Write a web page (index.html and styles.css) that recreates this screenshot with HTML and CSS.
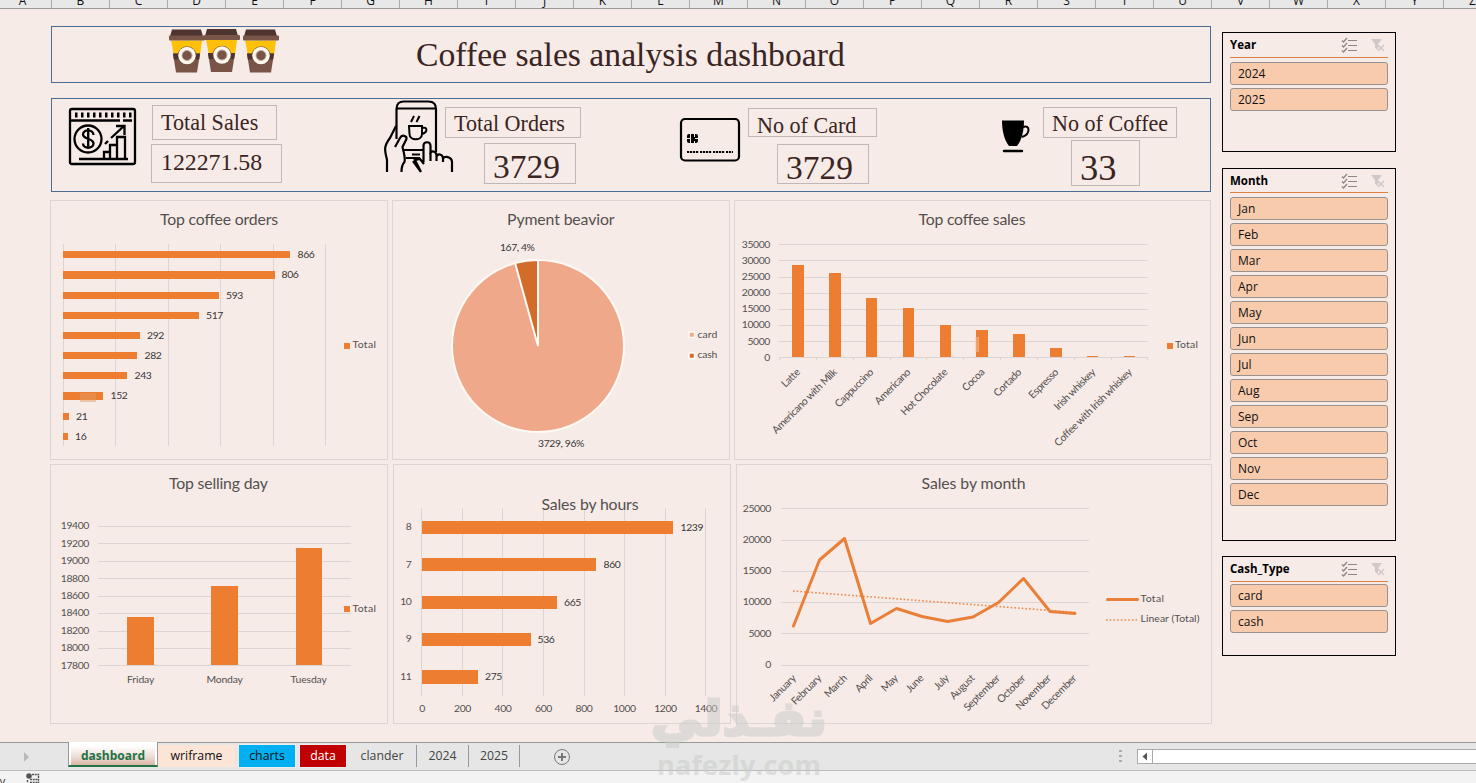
FILE: index.html
```html
<!DOCTYPE html>
<html lang="en">
<head>
<meta charset="utf-8">
<title>Coffee sales analysis dashboard</title>
<link rel="stylesheet" href="styles.css">
</head>
<body>
<div class="columns"><span>A</span><span>B</span><span>C</span><span>D</span><span>E</span><span>F</span><span>G</span><span>H</span><span>I</span><span>J</span><span>K</span><span>L</span><span>M</span><span>N</span><span>O</span><span>P</span><span>Q</span><span>R</span><span>S</span><span>T</span><span>U</span><span>V</span><span>W</span><span>X</span><span>Y</span><span>Z</span></div>

<div class="sheet">
<main class="board">
  <header class="banner">
    <svg class="cups" width="112" height="46" viewBox="168 28 112 46">
      <defs><g id="cup">
        <path d="M3 1h29l2 7H1z" fill="#4e342e"/><path d="M2 12h31l-2 15H5z" fill="#ffc107"/>
        <path d="M4 25h27l-3 19H7z" fill="#795548"/><path d="M4 25h27l-.8 6H4.800z" fill="#4e342e"/>
        <rect y="7" width="36" height="5" rx="1" fill="#795548"/>
        <circle cx="18" cy="27" r="9.300" fill="#6d4c41"/><circle cx="18" cy="27" r="8.700" fill="#fff8ee"/><circle cx="18" cy="27" r="5" fill="#795548"/>
        <circle cx="18" cy="27" r="5" fill="none" stroke="#bcaaa4" stroke-width="1"/>
      </g></defs>
      <use href="#cup" x="169" y="28.500"/><use href="#cup" x="204" y="28"/><use href="#cup" x="243" y="28.500"/>
    </svg>
    <h1>Coffee sales analysis dashboard</h1>
  </header>

  <section class="kpis">
    <div class="kpi sales">
      <svg width="70" height="60" viewBox="68 107 70 60" fill="none" stroke="#000" stroke-width="2.300">
        <rect x="70" y="109" width="65" height="55" rx="2"/>
        <path d="M75 115h58" stroke-width="5" stroke-dasharray="2.500 3.500"/>
        <path d="M70 120.500h50m3 0h9M79 159h49"/>
        <circle cx="88" cy="139" r="13.500"/>
        <path d="M93.500 135c0-6-10.500-6-10.500-.5 0 5 10.500 3.500 10.500 9 0 5.500-10.500 5.500-10.500 0M88.200 128v21"/>
        <path d="M104 158v-6h6v6m0 0v-13h7v13m0 0v-21h8v21M105 144l3-3m3-3l13-12m-8 0h8.500v9"/>
      </svg>
      <div class="boxes"><div class="name">Total Sales</div><div class="value">122271.58</div></div>
    </div>
    <div class="kpi orders">
      <svg width="72" height="76" viewBox="383 99 72 76" fill="none" stroke="#000" stroke-width="2.200">
        <path d="M396.500 139v-30c0-5 3-7.500 7-7.500h25c5 0 7.500 3 7.500 7.500v43M396.500 108.500h39M404 150h20M406 158h14M412 154.500h8"/>
        <path d="M409 126h13v8c0 7-12.500 7-12.500 0zM422 128c6-2 6 5-.8 6M411 122l3-6m2.500 6l3-6" stroke-width="2"/>
        <path d="M396 126l-6 12c-7 9-5 13-3 22v12M395 147l5-9c2-4 7-2 6.500 1l-4 8c2 9 3 11 2 15-2 2-3 6-3 10M413 161l8 11M423.500 162v-16c0-5 7-5 7 0v15M430 154c1-4 6-3 6.500 1v6m0-4c1-4 6-3 6.500 1v4m0-3c1-4 9-2 9 3v10M424 164l-4-5-5 1 6 12"/>
      </svg>
      <div class="boxes"><div class="name">Total Orders</div><div class="value">3729</div></div>
    </div>
    <div class="kpi card">
      <svg width="62" height="46" viewBox="679 117 62 46">
        <rect x="681" y="119" width="58" height="41.500" rx="4" fill="none" stroke="#000" stroke-width="2.200"/>
        <rect x="687" y="134" width="11" height="9" rx="2"/>
        <path d="M690.500 133v11M694.500 133v4M694.500 141v3M687 138.500h3M695 138.500h4" stroke="#f6ebe7"/>
        <path d="M687 152h46" stroke="#000" stroke-width="2.200" stroke-dasharray="2.200 .8 2.200 .8 2.200 .8 2.200 1.800"/>
      </svg>
      <div class="boxes"><div class="name">No of Card</div><div class="value">3729</div></div>
    </div>
    <div class="kpi coffee">
      <svg width="30" height="34" viewBox="1001 119 30 34">
        <path d="M1002 120.500h22c0 10-2 19-7 25.500h-8c-5-6-7-16-7-25.500z"/>
        <path d="M1023 127c7-3 8 7-1 10" fill="none" stroke="#000" stroke-width="2"/>
        <path d="M1004 151h18" stroke="#000" stroke-width="2.400" stroke-linecap="round"/>
      </svg>
      <div class="boxes"><div class="name">No of Coffee</div><div class="value">33</div></div>
    </div>
  </section>

  <section class="row top">
    <svg class="chart" width="338" height="260" viewBox="50 200 338 260">
      <text class="title" x="160" y="225" textLength="118">Top coffee orders</text>
      <path class="grid" d="M63.500 244v202M115.500 244v202M168.500 244v202M220.500 244v202M273.500 244v202M325.500 244v202"/>
      <path class="bar" d="M63 251h227v7H63zM63 271h212v8H63zM63 292h156v7H63zM63 312h136v7H63zM63 332h77v7H63zM63 352h74v7H63zM63 372h64v7H63zM63 392h40v8H63zM63 413h6v7H63zM63 433h5v7H63z"/>
      <rect x="80" y="393" width="16" height="9" fill="#e59a64" opacity=".5"/>
      <g class="dark"><text x="297.500" y="258">866</text><text x="281.500" y="278">806</text><text x="226" y="299">593</text><text x="206" y="319">517</text><text x="147" y="339">292</text><text x="144.500" y="359">282</text><text x="134.500" y="379">243</text><text x="110.500" y="399">152</text><text x="76" y="420">21</text><text x="75" y="440">16</text></g>
      <rect class="bar" x="344" y="343" width="6" height="6"/><text x="352.500" y="348" textLength="23">Total</text>
    </svg>
    <svg class="chart" width="338" height="260" viewBox="392 200 338 260">
      <text class="title" x="507" y="225" textLength="107.500">Pyment beavior</text>
      <circle cx="538" cy="346" r="86" fill="#f0a88a" stroke="#fffaf3" stroke-width="2"/>
      <path d="M538 346L515.100 263.100A86 86 0 0 1 538 260z" fill="#d16c2a" stroke="#fffaf3" stroke-width="2"/>
      <g class="dark"><text x="500" y="251" textLength="34.500">167, 4%</text><text x="538" y="447" textLength="46">3729, 96%</text></g>
      <g stroke="#fffaf3" stroke-width="1.500"><rect x="689" y="332" width="5.500" height="5.500" fill="#f0a88a"/><rect x="689" y="353" width="5.500" height="5.500" fill="#d16c2a"/></g>
      <text x="697.500" y="338" textLength="19.500">card</text><text x="697.500" y="358" textLength="19.500">cash</text>
    </svg>
    <svg class="chart" width="477" height="260" viewBox="734 200 477 260">
      <text class="title" x="918.500" y="225" textLength="107">Top coffee sales</text>
      <path class="grid" d="M779 244.500h369M779 260.500h369M779 277.500h369M779 293.500h369M779 309.500h369M779 325.500h369M779 341.500h369M779 357.500h369M779.500 357v3M816.500 357v3M853.500 357v3M890.500 357v3M926.500 357v3M963.500 357v3M1000.500 357v3M1037.500 357v3M1074.500 357v3M1111.500 357v3M1147.500 357v3"/>
      <path class="bar" d="M792 265h12v92h-12zM829 273h12v84h-12zM866 298h11v59h-11zM903 308h11v49h-11zM940 325h11v32h-11zM976 330h12v27h-12zM1013 334h12v23h-12zM1050 348h12v9h-12zM1087 356h11v1h-11zM1124 356h11v1h-11z"/>
      <rect x="975" y="337" width="4" height="15" fill="#f5c3a0" opacity=".5"/>
      <g class="end"><text x="770" y="248">35000</text><text x="770" y="264">30000</text><text x="770" y="280">25000</text><text x="770" y="296">20000</text><text x="770" y="312">15000</text><text x="770" y="328">10000</text><text x="770" y="345">5000</text><text x="770" y="361">0</text>
      <text transform="translate(800.500 373) rotate(-45)">Latte</text><text transform="translate(837.500 373) rotate(-45)">Americano with Milk</text><text transform="translate(874 373) rotate(-45)">Cappuccino</text><text transform="translate(911 373) rotate(-45)">Americano</text><text transform="translate(948 373) rotate(-45)">Hot Chocolate</text><text transform="translate(985 373) rotate(-45)">Cocoa</text><text transform="translate(1022 373) rotate(-45)">Cortado</text><text transform="translate(1059 373) rotate(-45)">Espresso</text><text transform="translate(1096 373) rotate(-45)">Irish whiskey</text><text transform="translate(1132.500 373) rotate(-45)">Coffee with Irish whiskey</text></g>
      <rect class="bar" x="1167" y="343" width="6" height="6"/><text x="1175" y="348" textLength="22.500">Total</text>
    </svg>
  </section>

  <section class="row bottom">
    <svg class="chart" width="338" height="260" viewBox="50 464 338 260">
      <text class="title" x="169" y="489" textLength="99">Top selling day</text>
      <path class="grid" d="M98 526.500h253M98 543.500h253M98 561.500h253M98 578.500h253M98 596.500h253M98 613.500h253M98 631.500h253M98 648.500h253M98 665.500h253"/>
      <path class="bar" d="M127 617h27v48h-27zM211 586h27v79h-27zM296 548h26v117h-26z"/>
      <g class="end"><text x="89" y="529">19400</text><text x="89" y="547">19200</text><text x="89" y="564">19000</text><text x="89" y="582">18800</text><text x="89" y="599">18600</text><text x="89" y="616">18400</text><text x="89" y="634">18200</text><text x="89" y="651">18000</text><text x="89" y="669">17800</text></g>
      <text x="127" y="683" textLength="27">Friday</text><text x="206.500" y="683" textLength="36">Monday</text><text x="290.500" y="683" textLength="36">Tuesday</text>
      <rect class="bar" x="344" y="606" width="6" height="6"/><text x="352.500" y="612" textLength="23">Total</text>
    </svg>
    <svg class="chart" width="338" height="260" viewBox="393 464 338 260">
      <path class="grid" d="M421.500 508v188M462.500 508v188M502.500 508v188M543.500 508v188M584.500 508v188M624.500 508v188M665.500 508v188M705.500 508v188"/>
      <text class="title" x="541.500" y="510" textLength="97">Sales by hours</text>
      <path class="bar" d="M422 521h251v13H422zM422 558h174v13H422zM422 596h135v13H422zM422 633h109v13H422zM422 670h56v14H422z"/>
      <g class="dark"><text x="680.500" y="531">1239</text><text x="603.500" y="568">860</text><text x="564" y="606">665</text><text x="537.500" y="643">536</text><text x="485" y="680">275</text></g>
      <g class="end"><text x="411.500" y="530">8</text><text x="411.500" y="568">7</text><text x="411.500" y="605">10</text><text x="411.500" y="642">9</text><text x="411.500" y="680">11</text></g>
      <g class="mid"><text x="422" y="712">0</text><text x="462.500" y="712">200</text><text x="503" y="712">400</text><text x="543.500" y="712">600</text><text x="584" y="712">800</text><text x="624.500" y="712">1000</text><text x="665.500" y="712">1200</text><text x="706" y="712">1400</text></g>
    </svg>
    <svg class="chart" width="476" height="260" viewBox="736 464 476 260">
      <text class="title" x="921.500" y="489" textLength="104">Sales by month</text>
      <path class="grid" d="M781 508.500h308M781 540.500h308M781 571.500h308M781 602.500h308M781 633.500h308M781 665.500h308"/>
      <path class="trend" d="M793 591L1077 612.500M1106 620h31"/>
      <path class="line" d="M793.500 626L819.500 560 844.500 538.500 870.500 623.500 896.500 608.500 922 616.500 947.500 621.500 973 617 998.500 602.500 1023.500 578.500 1050 611.500 1075 613.500M1107.500 599.500h30"/>
      <g class="end"><text x="771" y="512">25000</text><text x="771" y="543">20000</text><text x="771" y="574">15000</text><text x="771" y="605">10000</text><text x="771" y="637">5000</text><text x="771" y="668">0</text>
      <text transform="translate(796.500 679) rotate(-45)">January</text><text transform="translate(822 679) rotate(-45)">February</text><text transform="translate(847.500 679) rotate(-45)">March</text><text transform="translate(873 679) rotate(-45)">April</text><text transform="translate(898.500 679) rotate(-45)">May</text><text transform="translate(924 679) rotate(-45)">June</text><text transform="translate(949.500 679) rotate(-45)">July</text><text transform="translate(975 679) rotate(-45)">August</text><text transform="translate(1000.500 679) rotate(-45)">September</text><text transform="translate(1026 679) rotate(-45)">October</text><text transform="translate(1051.500 679) rotate(-45)">November</text><text transform="translate(1077 679) rotate(-45)">December</text></g>
      <text x="1140.500" y="602" textLength="23">Total</text><text x="1140.500" y="622" textLength="58.500">Linear (Total)</text>
    </svg>
  </section>
</main>

<aside class="slicers">
  <svg class="symbols" width="0" height="0">
    <symbol id="tools" viewBox="0 0 44 16">
      <path d="M7 3.500h9M7 8.500h9M7 13.500h9" stroke="#8d8886" stroke-width="1.200"/>
      <path d="M1 3.500l1.500 1.500L6 1M1 8.500L2.500 10 6 6M1 13.500L2.500 15 6 11" fill="none" stroke="#8d8886" stroke-width="1.400"/>
      <path d="M30 2h11l-4 5v6l-3-2V7z" fill="#cfc8c7"/><path d="M37 8l6 6m0-6l-6 6" stroke="#cfc8c7" stroke-width="1.500"/>
    </symbol>
  </svg>
  <div class="slicer year"><div class="head">Year<svg width="44" height="16"><use href="#tools"/></svg></div><div class="items"><span>2024</span><span>2025</span></div></div>
  <div class="slicer month"><div class="head">Month<svg width="44" height="16"><use href="#tools"/></svg></div><div class="items"><span>Jan</span><span>Feb</span><span>Mar</span><span>Apr</span><span>May</span><span>Jun</span><span>Jul</span><span>Aug</span><span>Sep</span><span>Oct</span><span>Nov</span><span>Dec</span></div></div>
  <div class="slicer cashtype"><div class="head">Cash_Type<svg width="44" height="16"><use href="#tools"/></svg></div><div class="items"><span>card</span><span>cash</span></div></div>
</aside>
</div>

<nav class="tabs">
  <svg class="nav-arrow" width="68" height="27"><path d="M24 9l5 5-5 5z" fill="#b9b9b9"/></svg>
  <span class="tab active"><b>dashboard</b></span>
  <span class="tab peach">wriframe</span>
  <span class="tab blue">charts</span>
  <span class="tab red">data</span>
  <span class="tab wide">clander</span>
  <span class="tab plain">2024</span>
  <span class="tab plain last">2025</span>
  <svg class="add" width="18" height="18" fill="none" stroke="#777"><circle cx="9" cy="9" r="7.500"/><path d="M5 9h8M9 5v8" stroke-width="2"/></svg>
  <span class="grip"></span>
  <div class="scroll"><svg width="14" height="13"><path d="M9 2.500v8L4.500 6.500z" fill="#555"/></svg><i></i></div>
</nav>
<footer class="status"><span>dy</span><svg width="14" height="12"><circle cx="3" cy="3" r="2.800" fill="#555"/><path d="M6 1.500h6.500V12M1.500 7v5M4 6.500h8M4 9.500h8" fill="none" stroke="#555" stroke-width="1.400" stroke-dasharray="2 .7"/></svg></footer>

<svg class="watermark" width="200" height="100" viewBox="640 683 200 100">
  <text class="arabic" x="739" y="735" text-anchor="middle" textLength="176" lengthAdjust="spacingAndGlyphs">نفـذلي</text>
  <text class="latin" x="657" y="775" textLength="164">nafezly.com</text>
</svg>
</body>
</html>
```
FILE: styles.css
```css
* { box-sizing: border-box; }
body { margin: 0; width: 1476px; height: 783px; overflow: hidden; position: relative; display: flex; flex-direction: column; background: #f6ebe7; font-family: "Open Sans", "Noto Sans", sans-serif; color: #111; }

.columns { height: 9px; flex: none; display: flex; overflow: hidden; background: #e8e8e8; border-bottom: 1px solid #999; }
.columns span { flex: none; width: 58px; height: 8px; border-right: 1px solid #aaa; font-size: 12px; line-height: 1px; text-align: center; }
.columns span:first-child { margin-left: -6px; }

.sheet { height: 733px; flex: none; display: flex; align-items: flex-start; padding-left: 51px; gap: 11px; }
.board { width: 1160px; padding-top: 17px; font-family: "Liberation Serif", serif; color: #3a2522; }

.banner { height: 57px; border: 1px solid #4b6c94; display: flex; align-items: flex-start; padding: 1px 0 0 116px; }
.banner h1 { margin: 7px 0 0 136px; font-size: 33.700px; line-height: 40px; font-weight: 400; white-space: nowrap; }

.kpis { height: 94px; margin-top: 15px; border: 1px solid #4b6c94; display: flex; }
.kpi { display: flex; align-items: flex-start; flex: none; }
.kpi svg { flex: none; }
.boxes { display: flex; flex-direction: column; align-items: flex-start; }
.name, .value { border: 1px solid #bfb8b7; white-space: nowrap; }
.name { font-size: 22.100px; padding-left: 8px; }
.value { font-size: 33.500px; padding-left: 8px; }
.sales { width: 331px; padding: 8px 0 0 16px; }
.sales .boxes { margin: -2px 0 0 13px; }
.sales .name { width: 125px; height: 35px; line-height: 34px; margin-left: 1px; }
.sales .value { width: 131px; height: 39px; line-height: 34px; margin-top: 4px; font-size: 23.800px; padding-left: 9px; }
.orders { width: 296px; }
.orders .boxes { margin: 8px 0 0 -10px; }
.orders .name { width: 136px; height: 31px; line-height: 32px; }
.orders .value { width: 92px; height: 41px; line-height: 45px; margin: 5px 0 0 39px; }
.card { width: 322px; padding-top: 18px; }
.card .boxes { margin: -9px 0 0 7px; }
.card .name { width: 129px; height: 29px; line-height: 34px; }
.card .value { width: 92px; height: 40px; line-height: 45px; margin: 7px 0 0 29px; }
.coffee { padding-top: 20px; }
.coffee .boxes { margin: -12px 0 0 12px; }
.coffee .name { width: 134px; height: 31px; line-height: 32px; }
.coffee .value { width: 69px; height: 46px; line-height: 54px; margin: 2px 0 0 28px; font-size: 36.500px; }

.row { display: flex; height: 260px; }
.top { margin: 8px 0 0 -1px; gap: 4px; }
.bottom { margin: 4px 0 0 -1px; gap: 5px; }
.chart { flex: none; outline: 1px solid #ddd5d3; outline-offset: -1px; font: 10.400px Lato, sans-serif; letter-spacing: -.4px; fill: #54504e; }
.chart .title { font-size: 15.800px; letter-spacing: 0; }
.grid { fill: none; stroke: #dcd5d3; }
.bar { fill: #ed7d31; }
.dark { fill: #3a3635; }
.end { text-anchor: end; }
.mid { text-anchor: middle; }
.line { fill: none; stroke: #e8803a; stroke-width: 3; stroke-linecap: round; stroke-linejoin: round; }
.trend { fill: none; stroke: #ed8a48; stroke-width: 1.600; stroke-dasharray: 1.600 2.100; }

.slicers { width: 174px; padding-top: 23px; display: flex; flex-direction: column; }
.symbols { position: absolute; }
.slicer { border: 1px solid #000; padding: 0 7px; }
.head { height: 25px; border-bottom: 1px solid #dd8040; display: flex; justify-content: space-between; align-items: center; font-size: 11.500px; font-weight: 700; line-height: 22px; color: #000; padding: 0 3px 1px 0; }
.items { display: flex; flex-direction: column; gap: 3px; padding-top: 4px; }
.items span { height: 23px; border: 1px solid #9a918e; border-radius: 3px; background: #f8cbad; font-size: 12px; line-height: 22px; padding-left: 7px; color: #111; }
.year { height: 120px; }
.month { height: 373px; margin-top: 16px; }
.month .head { height: 24px; padding-bottom: 0; }
.cashtype { height: 100px; margin-top: 15px; }
.cashtype .items { padding-top: 2px; }

.tabs { height: 29px; flex: none; border-top: 1px solid #999; border-bottom: 1px solid #bbb; background: #e6e6e6; display: flex; align-items: flex-start; font-size: 12.300px; }
.nav-arrow { flex: none; }
.tab { height: 22px; margin-top: 2px; line-height: 22px; text-align: center; flex: none; color: #444; }
.active { width: 90px; height: 25px; margin-top: -1px; background: #fff; border: 1px solid #999; border-top: 0; border-bottom: 2px solid #217346; padding: 2px 2px 1px; }
.active b { display: block; height: 21px; line-height: 23px; font-size: 12px; color: #217346; background: linear-gradient(#fff 10%, #ecd9d1 65%, #d9b6a5); }
.peach { width: 77px; background: #fce4d6; color: #111; }
.blue { width: 56px; margin-left: 4px; background: #00b0f0; color: #111; outline: 1px solid #eee; }
.red { width: 46px; margin-left: 5px; background: #c00000; color: #fff; outline: 1px solid #eee; }
.wide { width: 69px; margin-left: 2px; border-right: 1px solid #999; }
.plain { width: 52px; border-right: 1px solid #999; }
.last { width: 51px; }
.add { margin: 5px 0 0 33px; }
.grip { width: 3px; height: 15px; margin: 7px 0 0 548px; background: repeating-linear-gradient(#aaa 0 2px, transparent 2px 5px); }
.scroll { flex: 1; height: 15px; margin: 6px 0 0 15px; border: 1px solid #aaa; border-right: 0; background: #fff; display: flex; }
.scroll svg { border-right: 1px solid #aaa; flex: none; width: 15px; }
.status { height: 12px; background: #f3f3f3; display: flex; overflow: hidden; font-size: 11px; line-height: 20px; color: #333; }
.status span { margin-left: -7px; width: 33px; }
.status svg { margin-top: 2px; }

.watermark { position: absolute; left: 640px; top: 683px; fill: #c7cbc8; opacity: .5; font-family: "DejaVu Sans", sans-serif; font-weight: 700; }
.arabic { font-size: 48px; stroke: #c7cbc8; stroke-width: 3; }
.latin { font-family: "Open Sans", sans-serif; font-size: 27px; }
```
